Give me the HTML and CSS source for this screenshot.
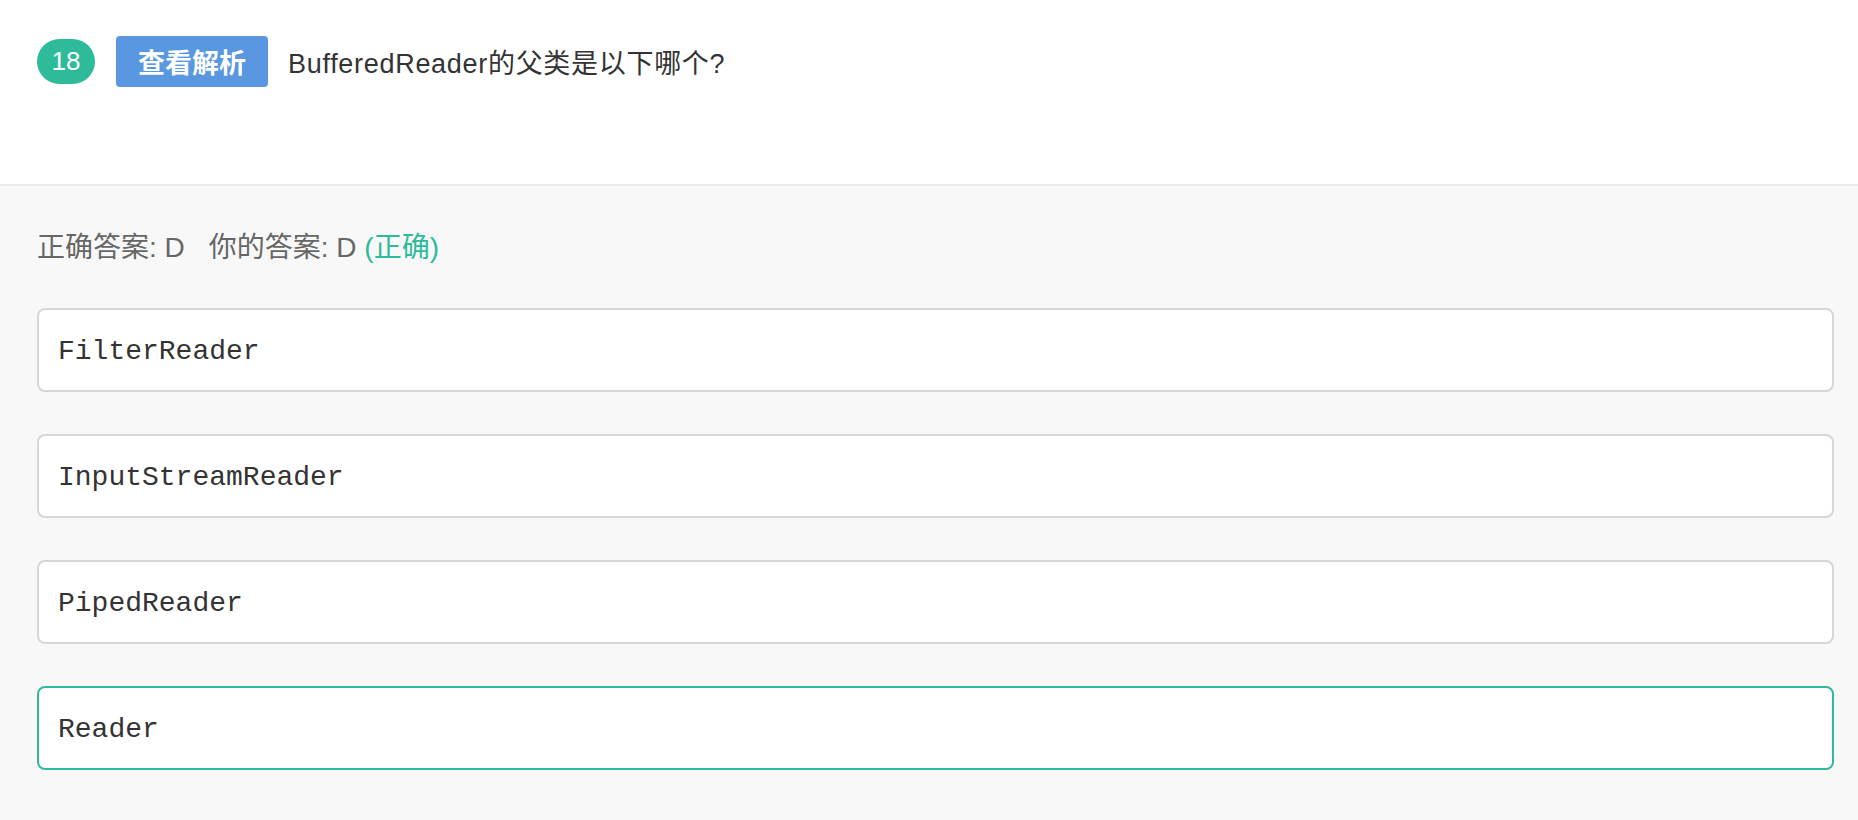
FILE: index.html
```html
<!DOCTYPE html>
<html lang="zh-CN">
<head>
<meta charset="utf-8">
<title>题目 18</title>
<link rel="stylesheet" href="styles.css">
</head>
<body>
<div class="header">
  <div class="title-row">
    <span class="num">18</span>
    <span class="btn">查看解析</span>
    <span class="question">BufferedReader的父类是以下哪个?</span>
  </div>
</div>
<div class="content">
  <div class="answer">正确答案: D<span class="yours">你的答案: D <span class="ok">(正确)</span></span></div>
  <div class="options">
    <div class="option">FilterReader</div>
    <div class="option">InputStreamReader</div>
    <div class="option">PipedReader</div>
    <div class="option correct">Reader</div>
  </div>
</div>
</body>
</html>
```

FILE: styles.css
```css
html, body {
  margin: 0;
  padding: 0;
}
body {
  font-family: "Liberation Sans", "Noto Sans CJK SC", sans-serif;
  color: #333;
  background: #f8f8f8;
  height: 820px;
  overflow: hidden;
}
.header {
  background: #fff;
  border-bottom: 2px solid #eaeaea;
  padding: 36px 24px 0 37px;
  box-sizing: border-box;
  height: 186px;
}
.title-row {
  display: flex;
  align-items: center;
  height: 51px;
}
.num {
  width: 58px;
  height: 45px;
  border-radius: 23px;
  background: #2dbb9a;
  color: #fff;
  font-size: 26px;
  display: flex;
  align-items: center;
  justify-content: center;
}
.btn {
  margin-left: 21px;
  width: 152px;
  height: 51px;
  border-radius: 4px;
  background: #5997e0;
  color: #fff;
  font-size: 27px;
  font-weight: 700;
  display: flex;
  align-items: center;
  justify-content: center;
}
.question {
  margin-left: 20px;
  font-size: 27px;
  letter-spacing: 0.7px;
  color: #333;
}
.content {
  padding: 47px 24px 0 37px;
}
.answer {
  font-size: 28px;
  line-height: 30px;
  color: #666;
}
.yours {
  margin-left: 24px;
}
.ok {
  color: #2dbb9a;
}
.options {
  margin-top: 45px;
  display: flex;
  flex-direction: column;
  gap: 42px;
}
.option {
  height: 84px;
  box-sizing: border-box;
  border: 2px solid #d6d6d6;
  border-radius: 8px;
  background: #fff;
  padding: 3px 0 0 19px;
  display: flex;
  align-items: center;
  font-family: "Liberation Mono", monospace;
  font-size: 28px;
  color: #333;
}
.option.correct {
  border-color: #2dbb9a;
}
```
